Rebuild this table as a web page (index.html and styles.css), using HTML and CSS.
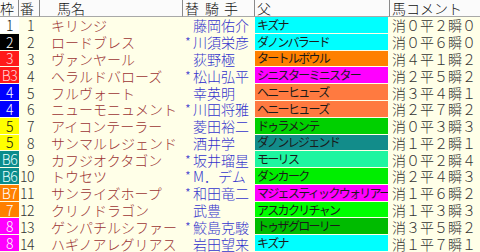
FILE: index.html
```html
<!DOCTYPE html>
<html lang="ja">
<head>
<meta charset="utf-8">
<link rel="stylesheet" href="styles.css">
</head>
<body>
<div class="tbl">
  <div class="h h-waku">枠</div>
  <div class="h h-ban">番</div>
  <div class="h h-name">馬名</div>
  <div class="h h-jk"><span class="mk">替</span><span class="jh">騎 手</span></div>
  <div class="h h-sire">父</div>
  <div class="h h-cm">馬コメント</div>

  <div class="waku w1">1</div><div class="ban">1</div><div class="name">キリンジ</div><div class="jk"><span class="mk"></span><span>藤岡佑介</span></div><div class="sire c-cyan">キズナ</div><div class="cm">消０平２瞬０</div>
  <div class="waku w2">2</div><div class="ban">2</div><div class="name">ロードブレス</div><div class="jk"><span class="mk">*</span><span>川須栄彦</span></div><div class="sire c-cyan">ダノンバラード</div><div class="cm">消０平６瞬０</div>
  <div class="waku w3">3</div><div class="ban">3</div><div class="name">ヴァンヤール</div><div class="jk"><span class="mk"></span><span>荻野極</span></div><div class="sire c-orange">タートルボウル</div><div class="cm">消４平１瞬２</div>
  <div class="waku w3">B3</div><div class="ban">4</div><div class="name">ヘラルドバローズ</div><div class="jk"><span class="mk">*</span><span>松山弘平</span></div><div class="sire c-magenta">シニスターミニスター</div><div class="cm">消２平５瞬２</div>
  <div class="waku w4">4</div><div class="ban">5</div><div class="name">フルヴォート</div><div class="jk"><span class="mk"></span><span>幸英明</span></div><div class="sire c-salmon">ヘニーヒューズ</div><div class="cm">消３平４瞬１</div>
  <div class="waku w4">4</div><div class="ban">6</div><div class="name">ニューモニュメント</div><div class="jk"><span class="mk">*</span><span>川田将雅</span></div><div class="sire c-salmon">ヘニーヒューズ</div><div class="cm">消２平７瞬２</div>
  <div class="waku w5">5</div><div class="ban">7</div><div class="name">アイコンテーラー</div><div class="jk"><span class="mk"></span><span>菱田裕二</span></div><div class="sire c-green1">ドゥラメンテ</div><div class="cm">消０平３瞬３</div>
  <div class="waku w5">5</div><div class="ban">8</div><div class="name">サンマルレジェンド</div><div class="jk"><span class="mk"></span><span>酒井学</span></div><div class="sire c-teal">ダノンレジェンド</div><div class="cm">消１平２瞬１</div>
  <div class="waku w6">B6</div><div class="ban">9</div><div class="name">カフジオクタゴン</div><div class="jk"><span class="mk">*</span><span>坂井瑠星</span></div><div class="sire c-spring">モーリス</div><div class="cm">消０平２瞬４</div>
  <div class="waku w6">B6</div><div class="ban">10</div><div class="name">トウセツ</div><div class="jk"><span class="mk">*</span><span>M．デム</span></div><div class="sire c-green2">ダンカーク</div><div class="cm">消２平４瞬３</div>
  <div class="waku w7">B7</div><div class="ban">11</div><div class="name">サンライズホープ</div><div class="jk"><span class="mk">*</span><span>和田竜二</span></div><div class="sire c-magenta">マジェスティックウォリアー</div><div class="cm">消１平６瞬２</div>
  <div class="waku w7">7</div><div class="ban">12</div><div class="name">クリノドラゴン</div><div class="jk"><span class="mk"></span><span>武豊</span></div><div class="sire c-lime">アスカクリチャン</div><div class="cm">消１平３瞬３</div>
  <div class="waku w8">8</div><div class="ban">13</div><div class="name">ゲンパチルシファー</div><div class="jk"><span class="mk">*</span><span>鮫島克駿</span></div><div class="sire c-green3">トゥザグローリー</div><div class="cm">消３平５瞬２</div>
  <div class="waku w8">8</div><div class="ban">14</div><div class="name">ハギノアレグリアス</div><div class="jk"><span class="mk"></span><span>岩田望来</span></div><div class="sire c-cyan">キズナ</div><div class="cm">消１平７瞬１</div>
</div>
</body>
</html>
```
FILE: styles.css
```css
html, body {
  margin: 0;
  padding: 0;
  background: #ffffe8;
}
body {
  width: 480px;
  height: 252px;
  overflow: hidden;
  font-family: "Noto Sans CJK JP", sans-serif;
  font-size: 14px;
  font-weight: 300;
}
.tbl {
  display: grid;
  grid-template-columns: 19px 21px 143px 72px 135px 90px;
  grid-template-rows: 17px repeat(14, 1fr);
  height: 252px;
}
.tbl > div {
  display: flex;
  align-items: center;
  white-space: nowrap;
  line-height: 14px;
  min-width: 0;
}
.h {
  background: #fbfbfb;
  color: #111;
  border-bottom: 1px solid #a8a8a8;
  border-right: 1px solid #8a8a8a;
  box-sizing: border-box;
}
.h-waku { padding-left: 0; }
.h-ban { padding-left: 1px; }
.h-name { padding-left: 17px; }
.h-jk { padding-left: 2px; }
.h-jk .mk { width: 20px; color: #111; }
.h-jk .jh { letter-spacing: 1px; }
.h-sire { padding-left: 2px; }
.h-cm { padding-left: 2px; border-right: none; }

.waku {
  justify-content: center;
  border-bottom: 1px solid #ffffe8;
  box-sizing: border-box;
  color: #fff;
  font-size: 14px;
  letter-spacing: -0.5px;
}
.w1 { background: #ffffff; color: #111; }
.w2 { background: #000000; color: #fff; }
.w3 { background: #ff1a1a; color: #ffd8d8; }
.w4 { background: #0000ff; color: #fff; }
.w5 { background: #ffff00; color: #111; }
.w6 { background: #0b8c8c; color: #e8ffff; }
.w7 { background: #ff8000; color: #fff; }
.w8 { background: #ff00ff; color: #fff; }

.ban {
  justify-content: flex-end;
  padding-right: 6px;
  color: #333;
  letter-spacing: -0.5px;
}
.name {
  padding-left: 11px;
  color: #9c3434;
}
.jk {
  color: #3434cc;
  padding-left: 2px;
}
.jk .mk {
  width: 8px;
  flex: none;
  font-size: 13px;
}
.sire {
  padding-left: 2px;
  color: #1a1a1a;
  font-size: 12px;
  font-weight: 400;
  letter-spacing: -1.7px;
  border-bottom: 1px solid #ffffe8;
  border-right: 2px solid #ffffe8;
  box-sizing: border-box;
  overflow: hidden;
}
.c-cyan { background: #00ffff; }
.c-orange { background: #ff8000; }
.c-magenta { background: #ff00ff; }
.c-salmon { background: #ff7a40; }
.c-green1 { background: #00d000; }
.c-teal { background: #128c8a; }
.c-spring { background: #1ef5a0; }
.c-green2 { background: #00ee00; }
.c-lime { background: #00ff00; }
.c-green3 { background: #00bb00; }

.cm {
  padding-left: 2px;
  color: #333;
}
```
